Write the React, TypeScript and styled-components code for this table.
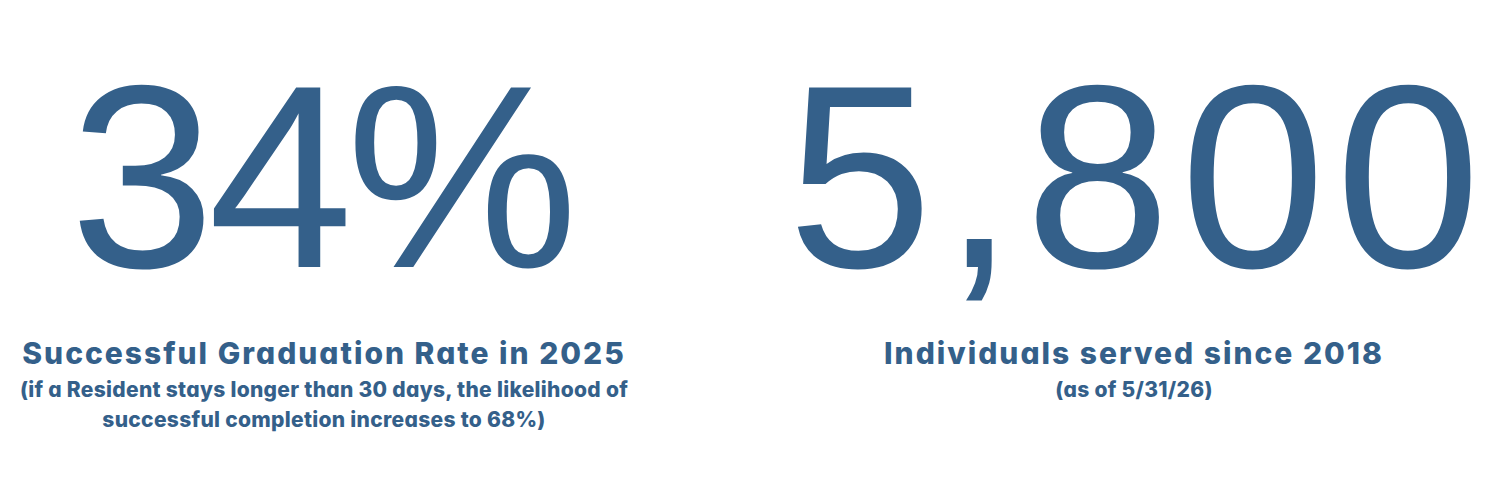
import React from "react";
import styled, { createGlobalStyle } from "styled-components";

const GlobalStyle = createGlobalStyle`
  html, body {
    margin: 0;
    padding: 0;
    background: #ffffff;
  }
`;

const stats = [
  {
    value: "34%",
    tracking: -7,
    title: "Successful Graduation Rate in 2025",
    note: [
      "(if a Resident stays longer than 30 days, the likelihood of",
      "successful completion increases to 68%)",
    ],
  },
  {
    value: "5,800",
    tracking: 10,
    title: "Individuals served since 2018",
    note: ["(as of 5/31/26)"],
  },
];

const App = () => {
  return (
    <>
      <GlobalStyle />
      <StatsRow>
        {stats.map((s) => (
          <Stat key={s.value}>
            <Figure $tracking={s.tracking}>{s.value}</Figure>
            <Title>{s.title}</Title>
            <Note>
              {s.note.map((line) => (
                <span key={line}>{line}</span>
              ))}
            </Note>
          </Stat>
        ))}
      </StatsRow>
    </>
  );
};

const StatsRow = styled.div`
  display: grid;
  grid-template-columns: repeat(2, 648px);
  column-gap: 162px;
  padding-top: 46px;
  color: #34608a;
`;

const Stat = styled.div`
  display: flex;
  flex-direction: column;
  align-items: center;
  text-align: center;
`;

// letter-spacing leaves a trailing gap after the last glyph; the matching
// left margin keeps the ink centred in the column
const Figure = styled.div<{ $tracking: number }>`
  font-family: "Liberation Sans", Arial, sans-serif;
  font-size: 261px;
  font-weight: 400;
  line-height: 1;
  letter-spacing: ${(p) => p.$tracking}px;
  margin-left: ${(p) => p.$tracking}px;
  white-space: nowrap;
`;

const Title = styled.div`
  margin-top: 28px;
  font-family: Inter, "Noto Sans", sans-serif;
  font-feature-settings: "cv11";
  font-size: 30px;
  font-weight: 800;
  line-height: 36px;
  letter-spacing: 2px;
  white-space: nowrap;
`;

const Note = styled.div`
  margin-top: 4px;
  display: flex;
  flex-direction: column;
  align-items: center;
  font-family: Inter, "Noto Sans", sans-serif;
  font-feature-settings: "cv11";
  font-size: 21px;
  font-weight: 800;
  line-height: 30px;
  letter-spacing: 0.3px;
  white-space: nowrap;
`;

export default App;
